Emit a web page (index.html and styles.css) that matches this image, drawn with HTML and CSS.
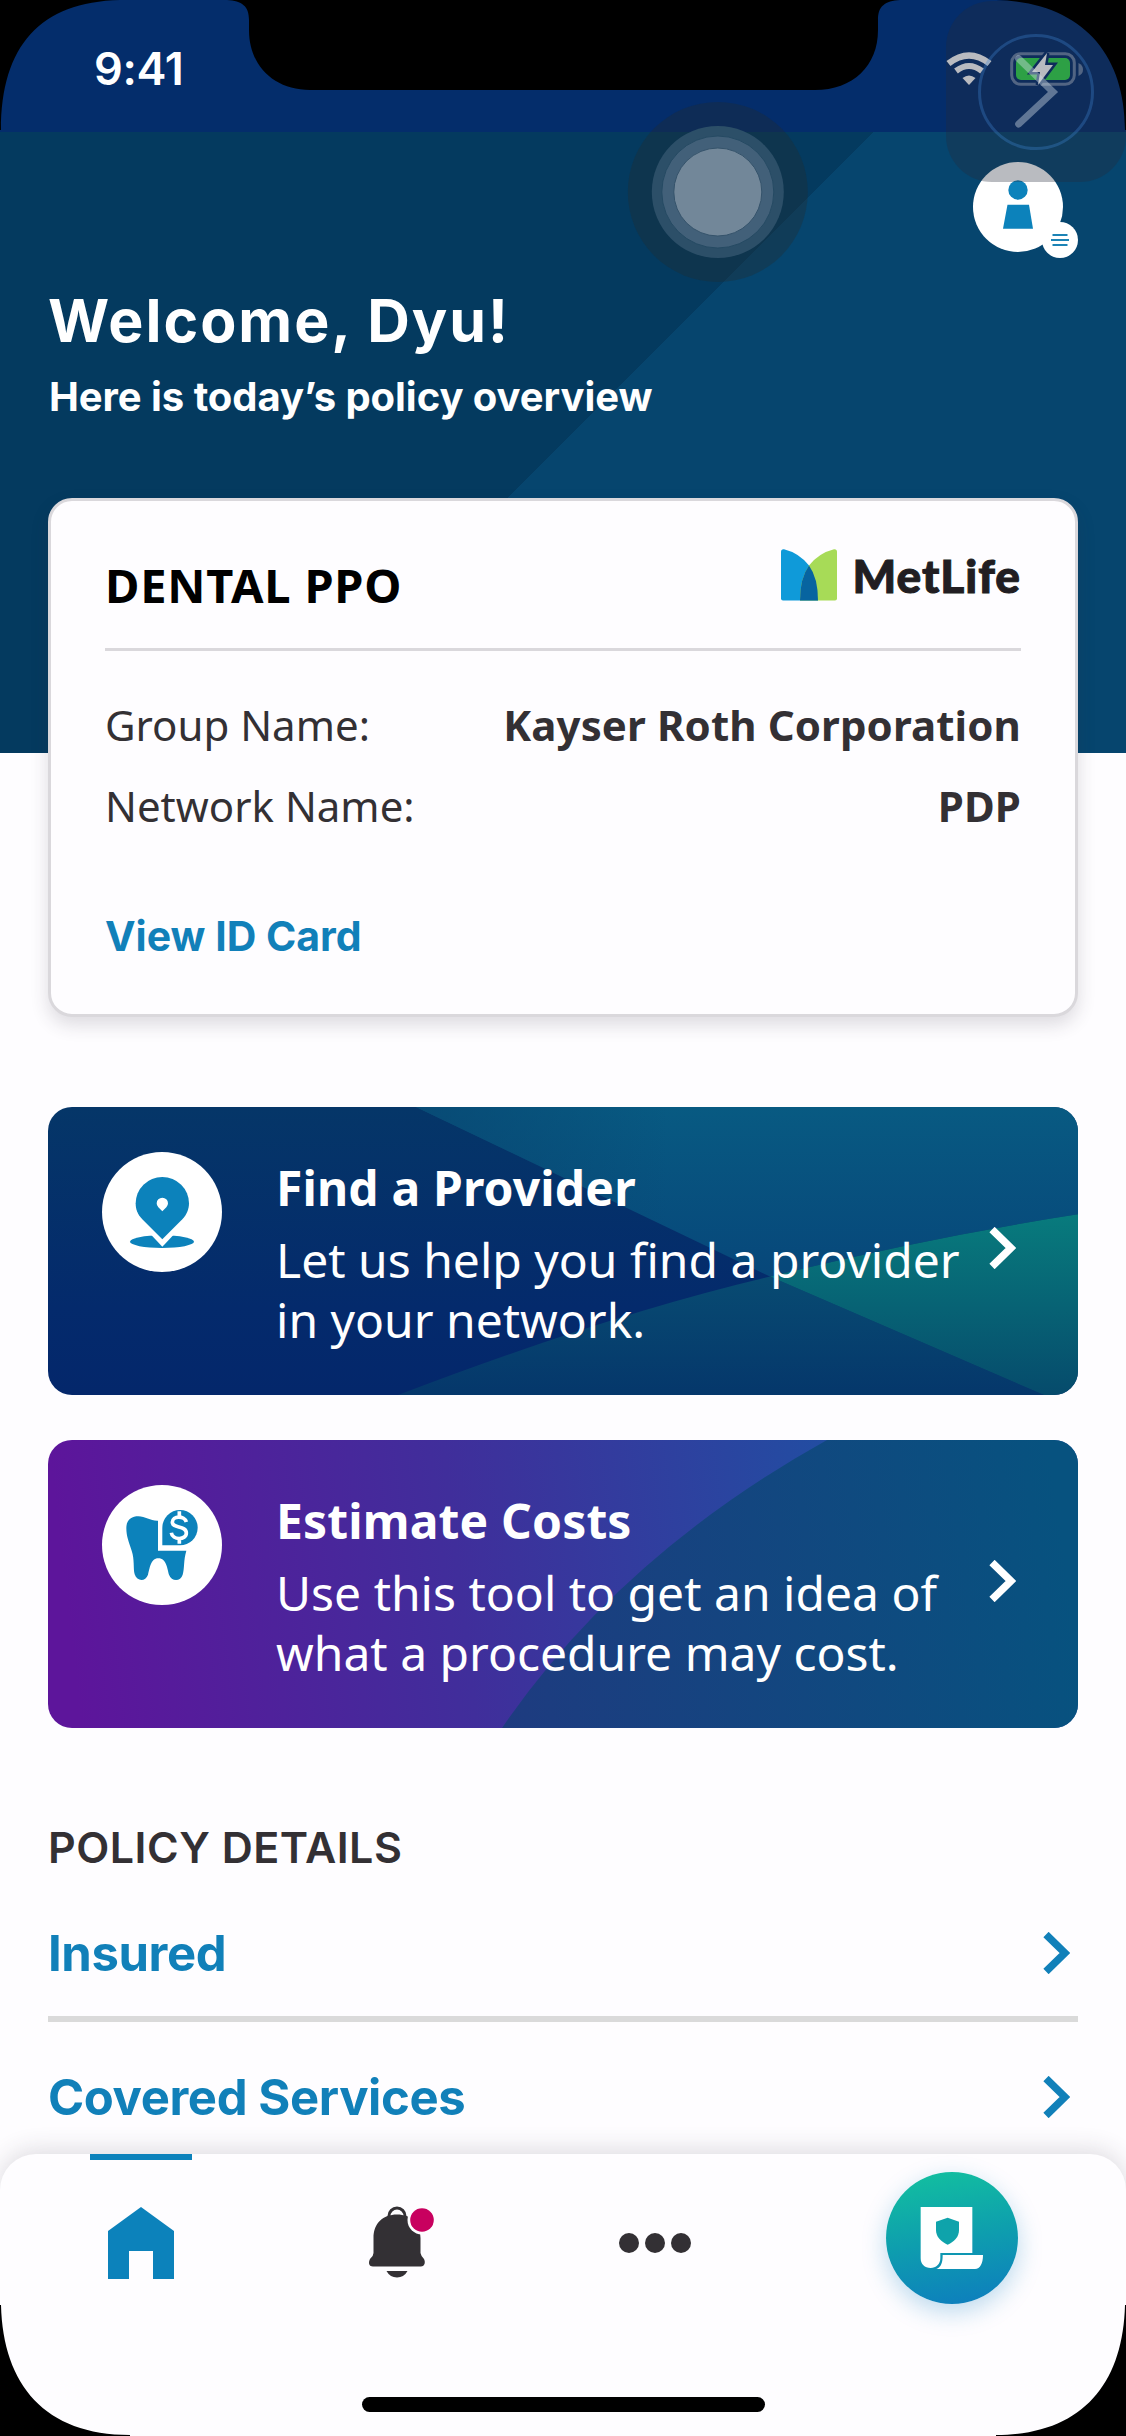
FILE: index.html
```html
<!DOCTYPE html>
<html lang="en">
<head>
<meta charset="utf-8">
<title>Policy overview</title>
<link rel="stylesheet" href="styles.css">
</head>
<body>
<div class="phone">
  <div class="statusbar">
    <span class="clock">9:41</span>
    <div class="status-icons">
      <svg width="46" height="34" viewBox="0 0 46 34" fill="none">
        <path d="M2.500 11.500Q23 -4.500 43.500 11.500" stroke="#fff" stroke-width="6.500"/>
        <path d="M10 19Q23 9 36 19" stroke="#fff" stroke-width="6"/>
        <path d="M16.500 26Q23 21 29.500 26L23 33Z" fill="#fff"/>
      </svg>
      <svg width="74" height="34" viewBox="0 0 74 34">
        <rect x="1.700" y="1.700" width="62.600" height="30.600" rx="9" fill="none" stroke="#fff" stroke-opacity=".4" stroke-width="3"/>
        <path d="M68.500 11Q73 13 73 17.500T68.500 24Z" fill="#fff" fill-opacity=".4"/>
        <rect x="6" y="6" width="54" height="22" rx="5" fill="#32d74b"/>
        <path d="M37 1L22 20H30L28 33L43 13H35Z" fill="#fff" stroke="#042d6b" stroke-width="5" paint-order="stroke"/>
      </svg>
    </div>
  </div>

  <header class="hero">
    <div class="avatar">
      <svg width="106" height="98" viewBox="0 0 106 98">
        <circle cx="45" cy="45" r="45" fill="#fff"/>
        <circle cx="45" cy="28" r="9.700" fill="#0c82bb"/>
        <path d="M34.500 42.800H56L60 66.700H30Z" fill="#0c82bb"/>
        <circle cx="87" cy="78" r="18" fill="#fff"/>
        <path d="M79.500 73H94.500M78 78H96M79.500 83H94.500" stroke="#1c83b5" stroke-width="2"/>
      </svg>
    </div>
    <h1>Welcome, Dyu!</h1>
    <p>Here is today’s policy overview</p>
  </header>

  <main>
    <section class="plan">
      <div class="plan-head">
        <h2>DENTAL PPO</h2>
        <div class="brand">
          <svg width="56" height="52" viewBox="0 0 56 52">
            <path d="M3 .3Q18 4 28 16.500Q37 29 37 51.500H2Q0 51.500 0 49.500V3Q0 0 3 .3Z" fill="#0f9ad9"/>
            <path d="M53 .3Q38 4 28 16.500Q19 29 19 51.500H54Q56 51.500 56 49.500V3Q56 0 53 .3Z" fill="#a7db57"/>
            <path d="M28 16.500Q37 29 37 51.500H19Q19 29 28 16.500Z" fill="#0764a0"/>
          </svg>
          <span>MetLife</span>
        </div>
      </div>
      <dl>
        <div><dt>Group Name:</dt><dd>Kayser Roth Corporation</dd></div>
        <div><dt>Network Name:</dt><dd>PDP</dd></div>
      </dl>
      <a class="id-link">View ID Card</a>
    </section>

    <section class="banner">
      <svg class="banner-art" viewBox="0 0 1030 287" preserveAspectRatio="none">
        <defs>
          <linearGradient id="navy" x1="0" y1="0" x2="0" y2="1"><stop offset="0" stop-color="#053668"/><stop offset=".7" stop-color="#042a6c"/><stop offset="1" stop-color="#04276b"/></linearGradient>
          <linearGradient id="sky" x1="0" y1="0" x2="0" y2="1"><stop offset="0" stop-color="#085a82"/><stop offset="1" stop-color="#07477a"/></linearGradient>
          <linearGradient id="deep" x1="0" y1="0" x2="0" y2="1"><stop offset="0" stop-color="#084b72"/><stop offset="1" stop-color="#05376b"/></linearGradient>
          <linearGradient id="green" x1="0" y1="0" x2="0" y2="1"><stop offset="0" stop-color="#087b7d"/><stop offset="1" stop-color="#064b6c"/></linearGradient>
          <linearGradient id="fade" x1="368" y1="0" x2="620" y2="0" gradientUnits="userSpaceOnUse"><stop offset="0" stop-color="#084470" stop-opacity=".7"/><stop offset="1" stop-color="#084470" stop-opacity="0"/></linearGradient>
        </defs>
        <path d="M0 0H1030V287H0Z" fill="url(#navy)"/>
        <path d="M368 0L722 169Q880 130 1030 107V0Z" fill="url(#sky)"/>
        <path d="M368 0L722 169Q880 130 1030 107V0Z" fill="url(#fade)"/>
        <path d="M350 287Q560 207 722 169L996 287Z" fill="url(#deep)"/>
        <path d="M722 169Q880 130 1030 107V287H996Z" fill="url(#green)"/>
      </svg>
      <svg class="banner-icon" viewBox="36 36 360 360">
        <circle cx="216" cy="216" r="180" fill="#fff"/>
        <ellipse cx="216" cy="305" rx="96" ry="19" fill="#0c82bb"/>
        <path d="M162 262L217 320L272 262Z" fill="#fff"/>
        <path d="M217 298L157 238C142 223 137 207 137 190A80 79 0 0 1 297 190C297 207 290 225 277 238Z" fill="#0c82bb"/>
        <path d="M217 214L205 202A17 17 0 1 1 229 202Z" fill="#fff"/>
      </svg>
      <div class="banner-text"><h3>Find a Provider</h3><p>Let us help you find a provider in your network.</p></div>
      <svg class="chevron" viewBox="0 0 27 42"><path d="M3 2.500L22 21L3 39.500" fill="none" stroke="#fff" stroke-width="7.500"/></svg>
    </section>

    <section class="banner">
      <svg class="banner-art" viewBox="0 0 1030 287" preserveAspectRatio="none">
        <defs>
          <linearGradient id="violet" x1="0" y1="0" x2="780" y2="-90" gradientUnits="userSpaceOnUse"><stop offset="0" stop-color="#5d159b"/><stop offset=".5" stop-color="#402e9b"/><stop offset="1" stop-color="#214ea2"/></linearGradient>
          <linearGradient id="ocean" x1="454" y1="287" x2="1030" y2="200" gradientUnits="userSpaceOnUse"><stop offset="0" stop-color="#1e3b80"/><stop offset="1" stop-color="#07527f"/></linearGradient>
        </defs>
        <path d="M0 0H1030V287H0Z" fill="url(#violet)"/>
        <path d="M454 287Q572 115 779 0H1030V287Z" fill="url(#ocean)"/>
      </svg>
      <svg class="banner-icon" viewBox="36 1035 360 360">
        <circle cx="216" cy="1215" r="180" fill="#fff"/>
        <path d="M109 1164C109 1138 126 1129 145 1129C166 1129 182 1143 204 1142V1232H289C280 1262 284 1285 278 1304C272 1326 244 1325 237 1304C232 1288 230 1255 205 1255C181 1255 179 1288 174 1304C166 1326 141 1324 134 1303C129 1285 134 1258 125 1232C117 1206 109 1190 109 1164Z" fill="#0c82bb"/>
        <path d="M217 1216V1163A53 53 0 1 1 270 1216Z" fill="#0c82bb"/>
        <path d="M289 1146C284 1127 247 1126 247 1147C247 1166 289 1156 289 1179C289 1201 247 1201 244 1178M268 1114V1132M268 1195V1211" fill="none" stroke="#fff" stroke-width="11"/>
      </svg>
      <div class="banner-text"><h3>Estimate Costs</h3><p>Use this tool to get an idea of what a procedure may cost.</p></div>
      <svg class="chevron" viewBox="0 0 27 42"><path d="M3 2.500L22 21L3 39.500" fill="none" stroke="#fff" stroke-width="7.500"/></svg>
    </section>

    <section class="details">
      <h2>POLICY DETAILS</h2>
      <a class="row"><span>Insured</span><svg class="chevron" viewBox="0 0 27 42"><path d="M3 2.500L22 21L3 39.500" fill="none" stroke="#1180b9" stroke-width="7.500"/></svg></a>
      <a class="row"><span>Covered Services</span><svg class="chevron" viewBox="0 0 27 42"><path d="M3 2.500L22 21L3 39.500" fill="none" stroke="#1180b9" stroke-width="7.500"/></svg></a>
    </section>
  </main>

  <nav class="tabbar">
    <a class="tab tab-active">
      <svg width="66" height="72" viewBox="0 0 66 72"><path d="M33 0L66 24V72H45V44H21V72H0V24Z" fill="#0c82bb"/></svg>
    </a>
    <a class="tab">
      <svg width="76" height="74" viewBox="0 0 76 74">
        <path d="M24 14V10A8 8 0 0 1 40 10V14" fill="none" stroke="#333034" stroke-width="3"/>
        <path d="M8.500 32C8.500 17 18 8.500 32 8.500S55.500 17 55.500 32V47Q56 50 59 53C61 57 59 60.500 56 60.500H8C4 60.500 3 57 5 53Q8.500 50 8.500 47Z" fill="#333034"/>
        <path d="M21.500 65H42.500Q39 71.500 32 71.500T21.500 65Z" fill="#333034"/>
        <circle cx="57" cy="14" r="14.500" fill="#fefdff"/>
        <circle cx="57" cy="14" r="11.800" fill="#c8005f"/>
      </svg>
    </a>
    <a class="tab">
      <svg width="72" height="20" viewBox="0 0 72 20" fill="#333034"><circle cx="10" cy="10" r="10"/><circle cx="36" cy="10" r="10"/><circle cx="62" cy="10" r="10"/></svg>
    </a>
    <a class="tab">
      <span class="fab">
        <svg viewBox="18 66 396 396">
          <path d="M122 171H277V309H181V325C181 343 168 354 152 354C134 354 122 343 122 325Z" fill="#fff"/>
          <path d="M188 315H309C309 340 301 357 285 357H169C184 351 188 338 188 315Z" fill="#fff"/>
          <path d="M203 203L237 215V240C237 261 223 275 203 284C183 275 168 261 168 240V215Z" fill="#0fa3ab"/>
        </svg>
      </span>
    </a>
  </nav>

  <svg class="overlay" viewBox="0 0 1126 2436">
    <circle cx="717.800" cy="192" r="90" fill="#262d2d" fill-opacity=".32"/>
    <circle cx="717.800" cy="192" r="66" fill="#2c4f68"/>
    <circle cx="717.800" cy="192" r="56" fill="#426079" stroke="#254a63"/>
    <circle cx="717.800" cy="192" r="44" fill="#728799" stroke="#35536b"/>
    <rect x="946" y="1" width="180" height="181" rx="46" fill="#262d3a" fill-opacity=".32"/>
    <circle cx="1036" cy="92" r="56.500" fill="none" stroke="#4085d0" stroke-opacity=".33" stroke-width="3"/>
    <path d="M1018.700 58.700L1053 92L1018.700 124" fill="none" stroke="#d2dde8" stroke-opacity=".42" stroke-width="7" stroke-linecap="round"/>
    <path d="M0 0H120C40 2 1 46 1 130H0Z"/>
    <path d="M1126 0H996C1078 2 1125 50 1125 130H1126Z"/>
    <path d="M227 0C242 1 249 6 249 20V30C249 66 274 90 310 90H815C853 90 878 66 878 30V20C878 6 885 1 900 0Z"/>
    <path d="M0 2436V2305H1C3 2385 45 2435 130 2435V2436Z"/>
    <path d="M1126 2436V2305H1125C1123 2385 1081 2435 996 2435V2436Z"/>
    <rect x="362" y="2397" width="403" height="15" rx="7.500"/>
  </svg>
</div>
</body>
</html>
```
FILE: styles.css
```css
* { box-sizing: border-box; }

body {
  margin: 0;
  background: #fefdff;
  font-family: "Inter", "Liberation Sans", sans-serif;
}

h1, h2, h3, p, dl, dd { margin: 0; }

.phone {
  position: relative;
  width: 1126px;
  height: 2436px;
  overflow: hidden;
  background: #fefdff;
}

.statusbar {
  display: flex;
  justify-content: space-between;
  height: 132px;
  padding: 38px 42px 0 94px;
  background: #042d6b;
}

.clock {
  font-size: 45px;
  font-weight: 600;
  line-height: 62px;
  letter-spacing: -0.3px;
  color: #fff;
}

.status-icons {
  display: flex;
  gap: 18px;
  padding-top: 14px;
}

.hero {
  height: 621px;
  padding: 30px 47px 0 48px;
  background: linear-gradient(135deg, #043a5f 0 618px, #06456e 618px);
  color: #fff;
}

.avatar {
  display: flex;
  justify-content: flex-end;
  height: 124px;
}

.hero h1 {
  font-size: 59px;
  font-weight: 750;
  line-height: 70px;
  letter-spacing: 2px;
}

.hero p {
  margin-top: 16px;
  padding-left: 1px;
  font-size: 40px;
  font-weight: 650;
  line-height: 50px;
  letter-spacing: -0.05px;
}

main { padding: 0 48px; }

.plan {
  position: relative;
  height: 519px;
  margin-top: -255px;
  padding: 0 54px;
  border: 3px solid #dad8dc;
  border-radius: 24px;
  background: #fefdff;
  box-shadow: 0 8px 18px rgba(50, 45, 60, 0.16);
}

.plan-head {
  display: flex;
  justify-content: space-between;
  height: 150px;
  padding-top: 48px;
  border-bottom: 3px solid #dad8dc;
}

.plan-head h2 {
  margin-top: 6px;
  font: 700 47px/60px "Noto Sans", sans-serif;
  letter-spacing: 0.8px;
  color: #000;
}

.brand {
  display: flex;
  gap: 15px;
}

.brand span {
  margin-top: -3px;
  font: 900 46px/60px "Lato", sans-serif;
  letter-spacing: 1px;
  color: #211e22;
  -webkit-text-stroke: 1px #211e22;
}

.plan dl { padding-top: 33px; }

.plan dl div {
  display: flex;
  justify-content: space-between;
  font: 400 42px/81px "Noto Sans", sans-serif;
  color: #333034;
}

.plan dd {
  font-weight: 700;
  letter-spacing: 0.1px;
}

.id-link {
  display: block;
  margin-top: 65px;
  font-size: 41px;
  font-weight: 700;
  line-height: 50px;
  color: #1180b9;
}

.banner {
  position: relative;
  display: flex;
  height: 288px;
  padding-left: 54px;
  overflow: hidden;
  border-radius: 24px;
  color: #fff;
}

.plan + .banner { margin-top: 90px; }
.banner + .banner { margin-top: 45px; }

.banner-art {
  position: absolute;
  inset: 0;
  width: 100%;
  height: 100%;
}

.banner-icon {
  position: relative;
  flex: none;
  width: 120px;
  height: 120px;
  margin-top: 45px;
}

.banner-text {
  position: relative;
  width: 713px;
  padding: 51px 0 0 54px;
}

.banner-text h3 {
  font: 700 48px/60px "Noto Sans", sans-serif;
  letter-spacing: 0.15px;
}

.banner-text p {
  width: 690px;
  margin-top: 12px;
  font: 400 48px/60px "Noto Sans", sans-serif;
}

.chevron {
  position: relative;
  flex: none;
  width: 27px;
  height: 42px;
}

.banner .chevron { margin: 120px 0 0 54px; }

.details { padding-top: 94px; }

.details h2 {
  font-size: 43px;
  font-weight: 600;
  line-height: 50px;
  letter-spacing: 0.5px;
  color: #333034;
}

.row {
  display: flex;
  align-items: center;
  justify-content: space-between;
  height: 149px;
  padding-right: 8px;
  font-size: 49px;
  font-weight: 700;
  letter-spacing: -0.4px;
  color: #1180b9;
}

.row span { padding-top: 2px; }

h2 + .row {
  height: 133px;
  margin-top: 17px;
  border-bottom: 6px solid #dadada;
}

.tabbar {
  position: absolute;
  left: 0;
  right: 0;
  bottom: 0;
  display: grid;
  grid-template-columns: 282px 229px 287px 308px;
  height: 282px;
  border-radius: 36px 36px 0 0;
  background: #fefdff;
  box-shadow: 0 -4px 24px rgba(50, 45, 60, 0.16);
}

.tab {
  display: flex;
  align-items: center;
  justify-content: center;
  height: 177px;
}

.tab:nth-child(2) { padding-left: 12px; }

.tab-active {
  background: linear-gradient(#0c82bb, #0c82bb) center top / 102px 6px no-repeat;
}

.fab {
  width: 132px;
  height: 132px;
  margin-top: -9px;
  border-radius: 50%;
  background: linear-gradient(170deg, #12bea0 5%, #0e9eae 50%, #0d7fbd 95%);
  box-shadow: 0 8px 24px rgba(13, 127, 189, 0.28);
}

.fab svg { display: block; }

.overlay {
  position: absolute;
  inset: 0;
  width: 1126px;
  height: 2436px;
}
```
